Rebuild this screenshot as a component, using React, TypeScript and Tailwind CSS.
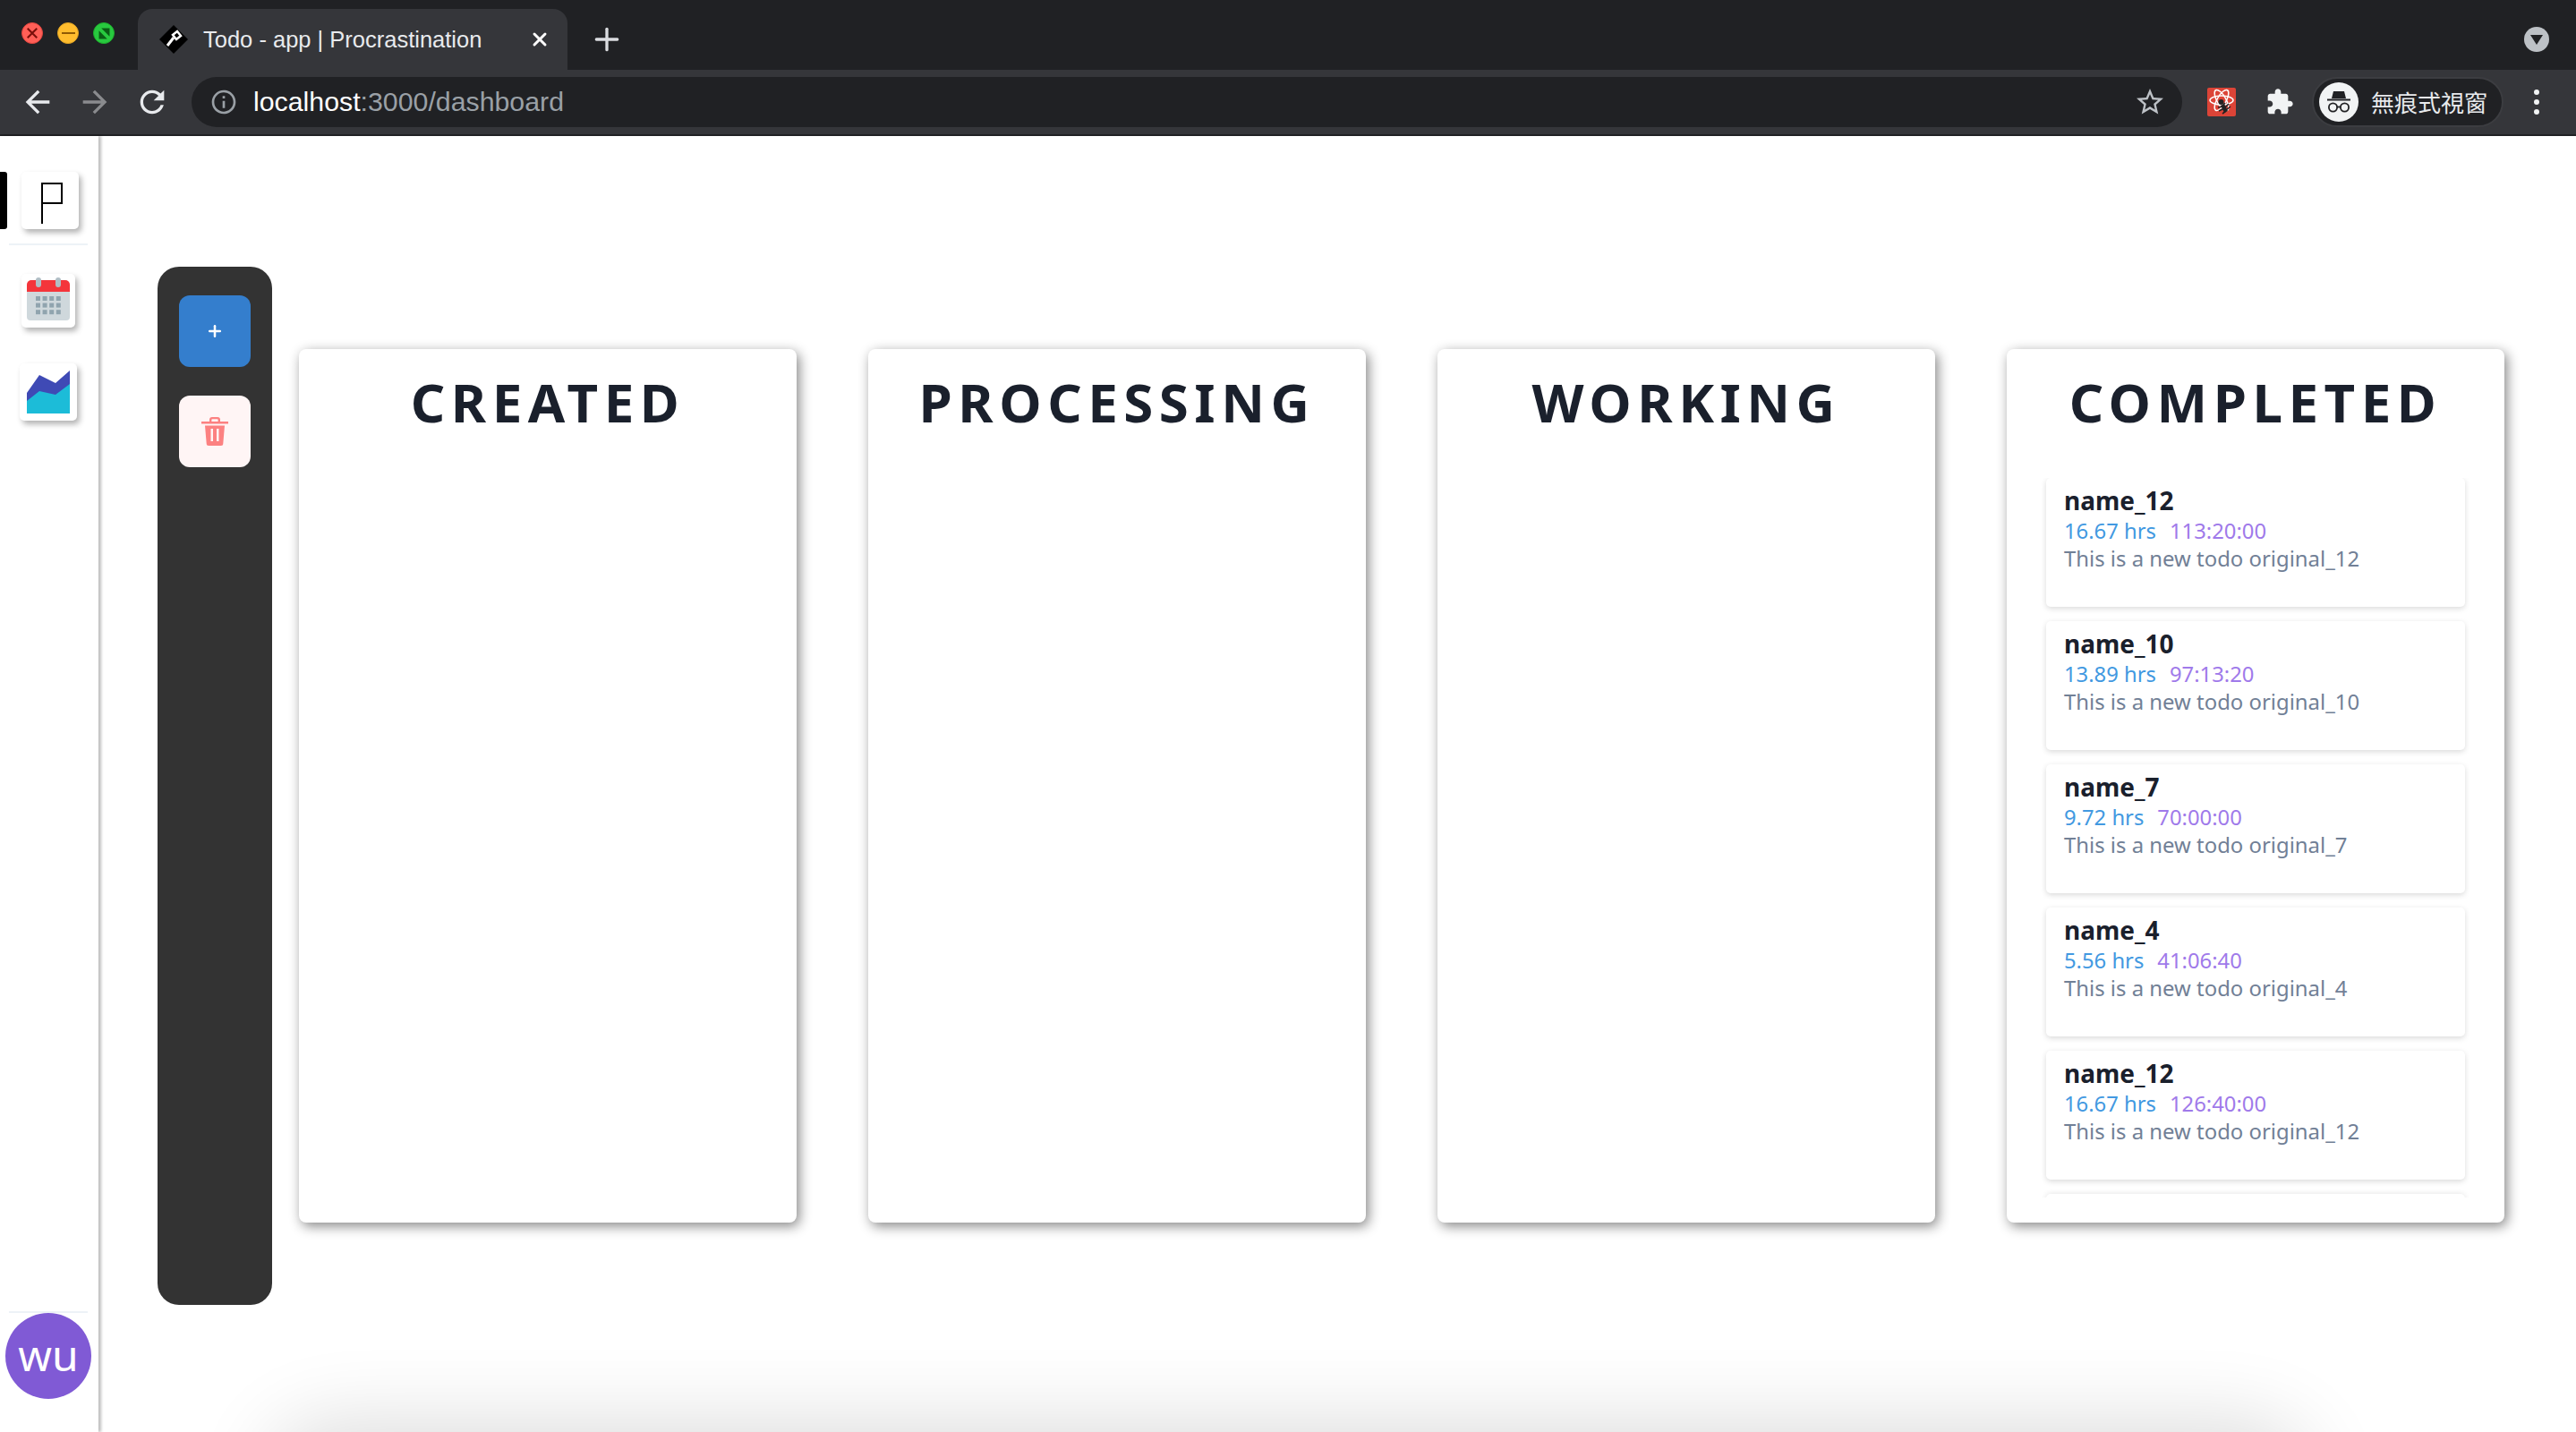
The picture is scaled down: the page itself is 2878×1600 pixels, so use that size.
import { Plus, X } from "lucide-react";

const columns = ["CREATED", "PROCESSING", "WORKING", "COMPLETED"];

const todos = [
  { name: "name_12", hours: "16.67 hrs", time: "113:20:00", text: "This is a new todo original_12" },
  { name: "name_10", hours: "13.89 hrs", time: "97:13:20", text: "This is a new todo original_10" },
  { name: "name_7", hours: "9.72 hrs", time: "70:00:00", text: "This is a new todo original_7" },
  { name: "name_4", hours: "5.56 hrs", time: "41:06:40", text: "This is a new todo original_4" },
  { name: "name_12", hours: "16.67 hrs", time: "126:40:00", text: "This is a new todo original_12" },
];

function MaterialIcon({ d, className }: { d: string; className: string }) {
  return (
    <svg viewBox="0 0 24 24" className={className} fill="currentColor">
      <path d={d} />
    </svg>
  );
}

const icons = {
  back: "M20 11H7.830l5.590-5.590L12 4l-8 8 8 8 1.410-1.410L7.830 13H20v-2z",
  forward: "M12 4l-1.410 1.410L16.170 11H4v2h12.170l-5.580 5.590L12 20l8-8z",
  reload: "M17.650 6.350C16.200 4.900 14.210 4 12 4c-4.420 0-7.990 3.580-7.990 8s3.570 8 7.990 8c3.730 0 6.840-2.550 7.730-6h-2.080c-.820 2.330-3.040 4-5.650 4-3.310 0-6-2.690-6-6s2.690-6 6-6c1.660 0 3.140.690 4.220 1.780L13 11h7V4l-2.350 2.350z",
  info: "M11 7h2v2h-2zm0 4h2v6h-2zm1-9C6.480 2 2 6.480 2 12s4.480 10 10 10 10-4.480 10-10S17.520 2 12 2zm0 18c-4.410 0-8-3.590-8-8s3.590-8 8-8 8 3.590 8 8-3.590 8-8 8z",
  star: "M22 9.240l-7.190-.620L12 2 9.190 8.630 2 9.240l5.460 4.730L5.820 21 12 17.270 18.180 21l-1.630-7.030L22 9.240zM12 15.400l-3.760 2.270 1-4.280-3.320-2.880 4.380-.380L12 6.100l1.710 4.040 4.380.380-3.320 2.880 1 4.280L12 15.400z",
  puzzle: "M20.500 11H19V7c0-1.100-.900-2-2-2h-4V3.500C13 2.120 11.880 1 10.500 1S8 2.120 8 3.500V5H4c-1.100 0-1.990.900-1.990 2v3.800H3.500c1.490 0 2.700 1.210 2.700 2.700s-1.210 2.700-2.700 2.700H2V20c0 1.100.900 2 2 2h3.800v-1.500c0-1.490 1.210-2.700 2.700-2.700 1.490 0 2.700 1.210 2.700 2.700V22H17c1.100 0 2-.900 2-2v-4h1.500c1.380 0 2.500-1.120 2.500-2.500S21.880 11 20.500 11z",
};

function TrafficLights() {
  return (
    <div className="flex gap-[16px] pl-[24px] pt-[25px] w-[154px] h-[78px] shrink-0">
      <div className="w-[24px] h-[24px] rounded-full bg-[#ff5f57] border border-[#e0443e] flex items-center justify-center">
        <svg viewBox="0 0 12 12" className="w-[14px] h-[14px]" stroke="#7a0f0a" strokeWidth="1.800"><path d="M1.500 1.500l9 9M10.500 1.500l-9 9" /></svg>
      </div>
      <div className="w-[24px] h-[24px] rounded-full bg-[#ffbd2e] border border-[#dea123] flex items-center justify-center">
        <div className="w-[15px] h-[2px] bg-[#8f5a04]" />
      </div>
      <div className="w-[24px] h-[24px] rounded-full bg-[#28c93f] border border-[#1dad2b] flex items-center justify-center">
        <svg viewBox="0 0 12 12" className="w-[13px] h-[13px]"><path d="M3 0.500h8.500v8.500zM0.500 3v8.500h8.500z" fill="#0a5c15" /></svg>
      </div>
    </div>
  );
}

function Favicon() {
  return (
    <svg viewBox="0 0 32 32" className="w-[32px] h-[32px] shrink-0">
      <path d="M16 0l16 16-16 16L0 16z" fill="#000" />
      <path d="M9 23l7-9" stroke="#fff" strokeWidth="3" />
      <path d="M15 11l5-4 4 5-5 4z" fill="none" stroke="#fff" strokeWidth="2.500" />
    </svg>
  );
}

function DevtoolsIcon() {
  return (
    <div className="w-[32px] h-[32px] bg-[#dc4437] rounded-[2px] shrink-0">
      <svg viewBox="0 0 32 32" className="w-[32px] h-[32px]" fill="none" stroke="#fff" strokeWidth="1.500">
        <ellipse cx="16" cy="14" rx="13" ry="5" />
        <ellipse cx="16" cy="14" rx="13" ry="5" transform="rotate(60 16 14)" />
        <ellipse cx="16" cy="14" rx="13" ry="5" transform="rotate(120 16 14)" />
        <circle cx="15.500" cy="16" r="3" fill="#222" stroke="none" />
        <path d="M17 19l4 8" stroke="#222" strokeWidth="4.500" />
        <path d="M20 17l-3 3M24 18l-4 4M26 21l-5 4M12 22l5-1M13 26l6-3M17 29l4-3" stroke="#222" strokeWidth="1.600" />
      </svg>
    </div>
  );
}

function IncognitoIcon() {
  return (
    <div className="w-[44px] h-[44px] rounded-full bg-[#f1f3f4] flex items-center justify-center shrink-0">
      <svg viewBox="0 0 32 32" className="w-[32px] h-[32px]">
        <path d="M10 4h12l2 8H8z M3 12.500h26v2H3z" fill="#202124" />
        <circle cx="9.500" cy="22" r="4.600" fill="none" stroke="#202124" strokeWidth="1.800" />
        <circle cx="22.500" cy="22" r="4.600" fill="none" stroke="#202124" strokeWidth="1.800" />
        <path d="M14 21.500h4" stroke="#202124" strokeWidth="1.800" />
      </svg>
    </div>
  );
}

function BrowserChrome() {
  return (
    <div className="h-[152px] shrink-0 font-['Liberation_Sans',sans-serif]">
      <div className="h-[78px] bg-[#202124] flex">
        <TrafficLights />
        <div className="mt-[10px] w-[480px] h-[68px] bg-[#35363a] rounded-t-[16px] flex items-center pl-[24px]">
          <Favicon />
          <span className="ml-[17px] w-[364px] text-[25.500px] text-[#e8eaed] whitespace-nowrap">Todo - app | Procrastination</span>
          <X className="w-[24px] h-[24px] text-white" strokeWidth={3} />
        </div>
        <div className="flex items-center pl-[24px] pt-[10px]">
          <Plus className="w-[40px] h-[40px] text-[#dadce0]" strokeWidth={2} />
        </div>
        <div className="flex-1" />
        <div className="flex items-center pr-[30px] pt-[10px]">
          <div className="w-[28px] h-[28px] rounded-full bg-[#bdc1c6] flex items-center justify-center">
            <div className="w-0 h-0 border-l-[7px] border-r-[7px] border-t-[11px] border-l-transparent border-r-transparent border-t-[#202124]" />
          </div>
        </div>
      </div>
      <div className="h-[74px] bg-[#35363a] border-b-2 border-[#202124] flex items-center">
        <MaterialIcon d={icons.back} className="ml-[22px] w-[40px] h-[40px] text-[#e8eaed]" />
        <MaterialIcon d={icons.forward} className="ml-[24px] w-[40px] h-[40px] text-[#8a8b8e]" />
        <MaterialIcon d={icons.reload} className="ml-[24px] w-[40px] h-[40px] text-[#e8eaed]" />
        <div className="ml-[24px] w-[2224px] h-[56px] rounded-full bg-[#202124] flex items-center">
          <MaterialIcon d={icons.info} className="ml-[20px] w-[32px] h-[32px] text-[#9aa0a6]" />
          <span className="ml-[17px] text-[30.300px] text-white">
            localhost<span className="text-[#9aa0a6]">:3000/dashboard</span>
          </span>
          <div className="flex-1" />
          <MaterialIcon d={icons.star} className="mr-[18px] w-[36px] h-[36px] text-[#bdc1c6]" />
        </div>
        <div className="ml-[28px]"><DevtoolsIcon /></div>
        <MaterialIcon d={icons.puzzle} className="ml-[33px] w-[32px] h-[32px] text-[#f1f3f4]" />
        <div className="ml-[20px] w-[214px] h-[56px] rounded-full bg-[#202124] border-2 border-[#3c3d41] flex items-center pl-[6px]">
          <IncognitoIcon />
          <span className="ml-[14px] mb-[2px] text-[26px] text-[#e8eaed] font-['Noto_Sans_CJK_TC',sans-serif]">無痕式視窗</span>
        </div>
        <div className="ml-[34px] flex flex-col gap-[5px]">
          <div className="w-[6px] h-[6px] rounded-full bg-[#f1f3f4]" />
          <div className="w-[6px] h-[6px] rounded-full bg-[#f1f3f4]" />
          <div className="w-[6px] h-[6px] rounded-full bg-[#f1f3f4]" />
        </div>
      </div>
    </div>
  );
}

function Sidebar() {
  return (
    <div className="w-[110px] shrink-0 flex flex-col relative shadow-[3px_0_3px_rgba(0,0,0,0.25)]">
      <div className="absolute left-0 top-[40px] w-[8px] h-[64px] bg-black rounded-r-[3px]" />
      <div className="mt-[40px] ml-[24px] w-[64px] h-[64px] bg-white rounded-[5px] shadow-[3px_4px_6px_rgba(0,0,0,0.3)] flex items-center justify-center">
        <svg viewBox="0 0 64 64" className="w-[64px] h-[64px]" fill="none" stroke="#000" strokeWidth="2">
          <path d="M23 58V13h22v22H23" />
        </svg>
      </div>
      <div className="mt-[16px] ml-[10px] w-[88px] h-[2px] bg-[#edf2f7]" />
      <div className="mt-[32px] ml-[24px] w-[60px] h-[60px] bg-white rounded-[5px] shadow-[3px_4px_6px_rgba(0,0,0,0.3)]">
        <svg viewBox="0 0 60 60" className="w-[60px] h-[60px]">
          <path d="M6 14a7 7 0 0 1 7-7h34a7 7 0 0 1 7 7v34a4 4 0 0 1-4 4H10a4 4 0 0 1-4-4z" fill="#cfd8dc" />
          <path d="M6 20V12a5 5 0 0 1 5-5h38a5 5 0 0 1 5 5v8z" fill="#f4353b" />
          <rect x="16" y="4" width="6" height="11" rx="3" fill="#b0bec5" />
          <rect x="38" y="4" width="6" height="11" rx="3" fill="#b0bec5" />
          {[0, 1, 2].flatMap(r =>
            [0, 1, 2, 3].map(c => (
              <rect key={`${r}-${c}`} x={16 + c * 7.6} y={25 + r * 7.6} width="5" height="5" fill="#90a4ae" />
            ))
          )}
        </svg>
      </div>
      <div className="mt-[40px] ml-[22px] w-[64px] h-[64px] bg-white rounded-[5px] shadow-[3px_4px_6px_rgba(0,0,0,0.3)]">
        <svg viewBox="0 0 64 64" className="w-[64px] h-[64px]">
          <path d="M8 33l14-20 18 9 16-14v28L40 44 8 56z" fill="#3f4ab5" />
          <path d="M8 42l14-11 18 4 16-12v33H8z" fill="#1cbcd8" />
        </svg>
      </div>
      <div className="flex-1" />
      <div className="ml-[10px] w-[88px] h-[2px] bg-[#edf2f7]" />
      <div className="mb-[37px] ml-[6px] w-[96px] h-[96px] rounded-full bg-[#805ad5] flex items-center justify-center pb-[3px] text-white text-[48px] font-['Noto_Sans',sans-serif]">
        wu
      </div>
    </div>
  );
}

function ActionPanel() {
  return (
    <div className="mt-[146px] ml-[66px] w-[128px] h-[1160px] shrink-0 bg-[#333333] rounded-[24px] flex flex-col items-center pt-[32px] gap-[32px]">
      <button className="w-[80px] h-[80px] rounded-[12px] bg-[#347ecd] flex items-center justify-center">
        <Plus className="w-[20px] h-[20px] text-white" strokeWidth={3} />
      </button>
      <button className="w-[80px] h-[80px] rounded-[12px] bg-[#fff5f5] flex items-center justify-center">
        <svg viewBox="0 0 30 32" className="w-[30px] h-[32px]" fill="#fc8181">
          <path d="M0 5h30v2.400H0zM9 6V3a3 3 0 0 1 3-3h6a3 3 0 0 1 3 3v3h-2.400V3a.7.7 0 0 0-.7-.7h-5.800a.7.7 0 0 0-.7.7v3z" />
          <path fillRule="evenodd" d="M4 9.500h22l-1.700 20a2.500 2.500 0 0 1-2.500 2.500H8.200a2.500 2.500 0 0 1-2.500-2.500zM10.500 13v14h2.500V13zM17 13v14h2.500V13z" />
        </svg>
      </button>
    </div>
  );
}

function TodoCard({ todo }: { todo: (typeof todos)[number] }) {
  return (
    <div className="h-[144px] mb-[16px] shrink-0 mx-[5px] bg-white rounded-[5px] shadow-[0_2px_6px_rgba(0,0,0,0.15)] px-[20px] pt-[6px]">
      <div className="text-[28px] leading-[38px] font-bold text-[#1a202c]">{todo.name}</div>
      <div className="text-[23.800px] leading-[30px] flex gap-[15px]">
        <span className="text-[#4299e1]">{todo.hours}</span>
        <span className="text-[#9f7aea]">{todo.time}</span>
      </div>
      <div className="text-[23.900px] leading-[32px] text-[#718096]">{todo.text}</div>
    </div>
  );
}

function Column({ title }: { title: string }) {
  return (
    <div className="w-[556px] h-[976px] bg-white rounded-[8px] shadow-[3px_4px_14px_rgba(0,0,0,0.48)] flex flex-col">
      <h2 className="h-[118px] flex items-center justify-center text-[60px] font-bold tracking-[6.500px] text-[#1a202c]">{title}</h2>
      {title === "COMPLETED" && (
        <div className="mt-[26px] mx-[39px] h-[804px] overflow-hidden flex flex-col">
          {todos.map((t, i) => (
            <TodoCard key={i} todo={t} />
          ))}
          <div className="h-[144px] mx-[5px] shrink-0 bg-white rounded-[5px] shadow-[0_0_6px_rgba(0,0,0,0.12)]" />
        </div>
      )}
    </div>
  );
}

export default function App() {
  return (
    <div className="w-[2878px] h-[1600px] flex flex-col overflow-hidden bg-white relative font-['Noto_Sans',sans-serif]">
      <BrowserChrome />
      <div className="flex-1 flex min-h-0">
        <Sidebar />
        <ActionPanel />
        <div className="ml-[30px] mt-[238px] flex gap-[80px] items-start">
          {columns.map(c => (
            <Column key={c} title={c} />
          ))}
        </div>
      </div>
      {/* shadow of something below the fold */}
      <div className="absolute left-[330px] top-[1620px] w-[2220px] h-[80px] rounded-[40px] shadow-[0_0_90px_30px_rgba(0,0,0,0.14)]" />
    </div>
  );
}
